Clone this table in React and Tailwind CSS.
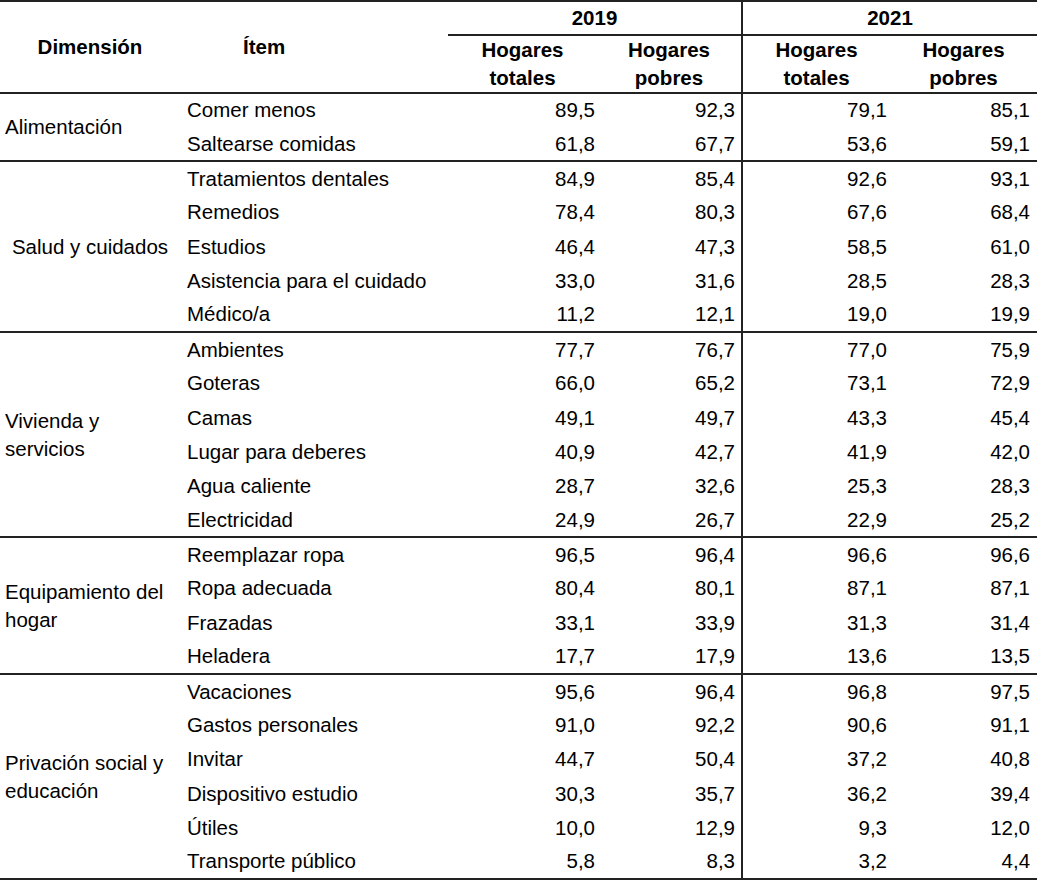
import React from "react";

const groups = [
  {
    name: "Alimentación",
    align: "left",
    rows: [
      ["Comer menos", "89,5", "92,3", "79,1", "85,1"],
      ["Saltearse comidas", "61,8", "67,7", "53,6", "59,1"],
    ],
  },
  {
    name: "Salud y cuidados",
    align: "center",
    rows: [
      ["Tratamientos dentales", "84,9", "85,4", "92,6", "93,1"],
      ["Remedios", "78,4", "80,3", "67,6", "68,4"],
      ["Estudios", "46,4", "47,3", "58,5", "61,0"],
      ["Asistencia para el cuidado", "33,0", "31,6", "28,5", "28,3"],
      ["Médico/a", "11,2", "12,1", "19,0", "19,9"],
    ],
  },
  {
    name: ["Vivienda y", "servicios"],
    align: "left",
    rows: [
      ["Ambientes", "77,7", "76,7", "77,0", "75,9"],
      ["Goteras", "66,0", "65,2", "73,1", "72,9"],
      ["Camas", "49,1", "49,7", "43,3", "45,4"],
      ["Lugar para deberes", "40,9", "42,7", "41,9", "42,0"],
      ["Agua caliente", "28,7", "32,6", "25,3", "28,3"],
      ["Electricidad", "24,9", "26,7", "22,9", "25,2"],
    ],
  },
  {
    name: ["Equipamiento del", "hogar"],
    align: "left",
    rows: [
      ["Reemplazar ropa", "96,5", "96,4", "96,6", "96,6"],
      ["Ropa adecuada", "80,4", "80,1", "87,1", "87,1"],
      ["Frazadas", "33,1", "33,9", "31,3", "31,4"],
      ["Heladera", "17,7", "17,9", "13,6", "13,5"],
    ],
  },
  {
    name: ["Privación social y", "educación"],
    align: "left",
    rows: [
      ["Vacaciones", "95,6", "96,4", "96,8", "97,5"],
      ["Gastos personales", "91,0", "92,2", "90,6", "91,1"],
      ["Invitar", "44,7", "50,4", "37,2", "40,8"],
      ["Dispositivo estudio", "30,3", "35,7", "36,2", "39,4"],
      ["Útiles", "10,0", "12,9", "9,3", "12,0"],
      ["Transporte público", "5,8", "8,3", "3,2", "4,4"],
    ],
  },
];

function DimCell({ group, span }) {
  const label = Array.isArray(group.name) ? group.name : [group.name];
  return (
    <td
      rowSpan={span}
      className={
        "align-middle leading-[28px] " +
        (group.align === "center" ? "text-center" : "text-left pl-[5px]")
      }
    >
      {label.map((l, i) => (
        <div key={i}>{l}</div>
      ))}
    </td>
  );
}

export default function App() {
  return (
    <div className="w-[1037px] bg-white text-black font-['Liberation_Sans',Arial,sans-serif] text-[20.5px]">
      <table className="w-[1037px] table-fixed border-collapse">
        <colgroup>
          <col className="w-[180px]" />
          <col className="w-[268px]" />
          <col className="w-[149px]" />
          <col className="w-[145px]" />
          <col className="w-[148px]" />
          <col className="w-[147px]" />
        </colgroup>
        <thead className="font-bold">
          <tr className="h-[34px] border-t-2 border-[#222]">
            <th rowSpan={2} className="align-middle text-center">Dimensión</th>
            <th rowSpan={2} className="align-middle text-left pl-[63px]">Ítem</th>
            <th colSpan={2} className="text-center border-b-2 border-r-2 border-[#222] leading-none">2019</th>
            <th colSpan={2} className="text-center border-b-2 border-[#222] leading-none">2021</th>
          </tr>
          <tr className="h-[58px] border-b-2 border-[#222] leading-[28px]">
            <th className="text-center font-bold">Hogares<br />totales</th>
            <th className="text-center font-bold border-r-2 border-[#222]">Hogares<br />pobres</th>
            <th className="text-center font-bold">Hogares<br />totales</th>
            <th className="text-center font-bold">Hogares<br />pobres</th>
          </tr>
        </thead>
        <tbody>
          {groups.map((g, gi) =>
            g.rows.map((r, ri) => (
              <tr
                key={gi + "-" + ri}
                className={
                  "h-[34.2px] leading-none " +
                  (ri === g.rows.length - 1 ? "border-b-2 border-[#222]" : "")
                }
              >
                {ri === 0 && <DimCell group={g} span={g.rows.length} />}
                <td className="pl-[7px] text-left whitespace-nowrap">{r[0]}</td>
                <td className="text-right pr-[2px]">{r[1]}</td>
                <td className="text-right pr-[6px] border-r-2 border-[#222]">{r[2]}</td>
                <td className="text-right pr-[3px]">{r[3]}</td>
                <td className="text-right pr-[7px]">{r[4]}</td>
              </tr>
            ))
          )}
        </tbody>
      </table>
    </div>
  );
}
